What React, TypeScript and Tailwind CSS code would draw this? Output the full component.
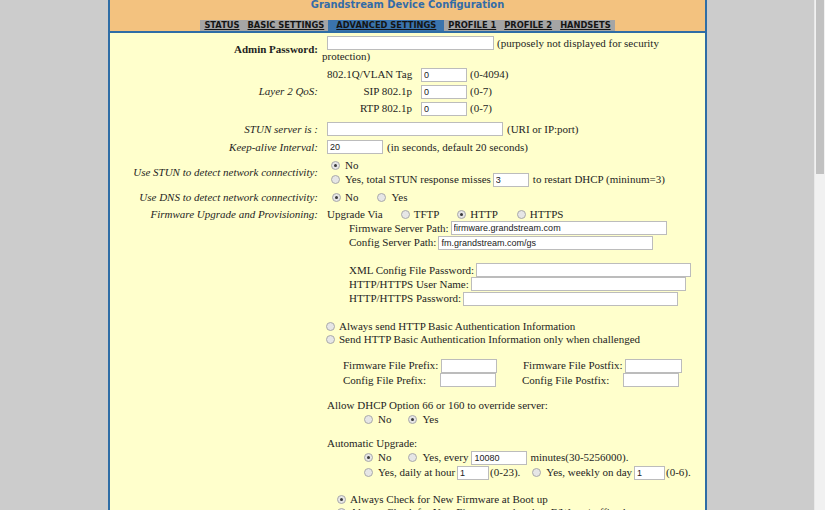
import React from "react";

const Radio = ({ checked = false, className = "" }: { checked?: boolean; className?: string }) => (
  <span
    className={`inline-flex h-[9px] w-[9px] shrink-0 items-center justify-center rounded-full border border-[#a9a9a9] bg-[#e6e6e6] ${className}`}
  >
    {checked && <span className="h-[3px] w-[3px] rounded-full bg-[#3a3a3a]" />}
  </span>
);

const Field = ({ value = "", className = "" }: { value?: string; className?: string }) => (
  <input
    readOnly
    defaultValue={value}
    className={`h-[14px] shrink-0 border border-[#bcbcbc] bg-white pl-[2px] font-['Liberation_Sans',Arial,sans-serif] text-[9px] text-[#222] outline-none ${className}`}
  />
);

const tabs = ["STATUS", "BASIC SETTINGS", "ADVANCED SETTINGS", "PROFILE 1", "PROFILE 2", "HANDSETS"];

const Row = ({ label, bold = false, top = false, className = "", children }: {
  label: string;
  bold?: boolean;
  top?: boolean;
  className?: string;
  children: React.ReactNode;
}) => (
  <div className={`grid grid-cols-[217px_1fr] ${className}`}>
    <div
      className={`flex justify-end pr-[9px] text-right ${top ? "items-start leading-[13px]" : "items-center"} ${bold ? "font-bold" : "italic"}`}
    >
      {label}
    </div>
    <div className="flex flex-col">{children}</div>
  </div>
);

const Line = ({ h = "h-[14px]", className = "", children }: { h?: string; className?: string; children?: React.ReactNode }) => (
  <div className={`flex items-center whitespace-nowrap ${h} ${className}`}>{children}</div>
);

export default function App() {
  return (
    <div className="flex h-[510px] w-[825px] overflow-hidden bg-[#cccccc] font-['Liberation_Serif','Times_New_Roman',serif] text-[11px] text-[#1e1e1e]">
      <div className="flex-1">
        <div className="ml-[108px] w-[599px] border-x-2 border-[#2f6da5] bg-[#ffffcc] pb-[40px]">
          {/* header */}
          <div className="flex h-[31px] flex-col items-center overflow-hidden bg-[#f3c27f]">
            <div className="-mt-[2px] h-[14px] font-['DejaVu_Sans_Condensed','DejaVu_Sans',Tahoma,sans-serif] text-[11px] font-bold leading-[14px] text-[#336ca8]">
              Grandstream Device Configuration
            </div>
            <div className="mt-auto flex h-[11px] bg-[#a5a5a5] font-['DejaVu_Sans',Verdana,sans-serif] text-[8.3px] font-bold leading-[11px] text-[#141414]">
              {tabs.map((t) => (
                <span
                  key={t}
                  className={`underline ${t === "ADVANCED SETTINGS" ? "bg-[#3a74ad] px-[8px]" : "px-[4px]"}`}
                >
                  {t}
                </span>
              ))}
            </div>
          </div>
          <div className="h-[2px] bg-[#2f6da5]" />

          {/* admin password */}
          <Row label="Admin Password:" bold className="pt-[3px]">
            <Line>
              <Field className="w-[167px]" />
              <span className="ml-[3px]">(purposely not displayed for security</span>
            </Line>
            <Line h="h-[13px]" className="-ml-[5px]">protection)</Line>
          </Row>

          {/* layer 2 qos */}
          <Row label="Layer 2 QoS:" className="mt-[3px]">
            {[
              ["802.1Q/VLAN Tag", "(0-4094)"],
              ["SIP 802.1p", "(0-7)"],
              ["RTP 802.1p", "(0-7)"],
            ].map(([l, r]) => (
              <Line key={l} h="h-[17px]">
                <span className="w-[85px] text-right">{l}</span>
                <Field value="0" className="ml-[9px] w-[46px]" />
                <span className="ml-[3px]">{r}</span>
              </Line>
            ))}
          </Row>

          <Row label="STUN server is :" className="mt-[3px]">
            <Line h="h-[18px]">
              <Field className="w-[176px]" />
              <span className="ml-[4px]">(URI or IP:port)</span>
            </Line>
          </Row>

          <Row label="Keep-alive Interval:">
            <Line h="h-[18px]">
              <Field value="20" className="w-[56px]" />
              <span className="ml-[4px]">(in seconds, default 20 seconds)</span>
            </Line>
          </Row>

          <Row label="Use STUN to detect network connectivity:" className="pt-[2px]">
            <Line>
              <Radio checked className="ml-[4px]" />
              <span className="ml-[5px]">No</span>
            </Line>
            <Line h="h-[15px]">
              <Radio className="ml-[4px]" />
              <span className="ml-[5px]">Yes, total STUN response misses</span>
              <Field value="3" className="ml-[2px] w-[36px]" />
              <span className="ml-[4px]">to restart DHCP (mininum=3)</span>
            </Line>
          </Row>

          <Row label="Use DNS to detect network connectivity:">
            <Line h="h-[21px]">
              <Radio checked className="ml-[5px]" />
              <span className="ml-[4px]">No</span>
              <Radio className="ml-[19px]" />
              <span className="ml-[5px]">Yes</span>
            </Line>
          </Row>

          <Row label="Firmware Upgrade and Provisioning:" top>
            <Line h="h-[13px]">
              <span>Upgrade Via</span>
              <Radio className="ml-[18px]" />
              <span className="ml-[4px]">TFTP</span>
              <Radio checked className="ml-[18px]" />
              <span className="ml-[4px]">HTTP</span>
              <Radio className="ml-[19px]" />
              <span className="ml-[4px]">HTTPS</span>
            </Line>
            <Line className="pl-[22px]">
              <span>Firmware Server Path:</span>
              <Field value="firmware.grandstream.com" className="ml-[2px] w-[216px]" />
            </Line>
            <Line h="h-[15px]" className="pl-[22px]">
              <span>Config Server Path:</span>
              <Field value="fm.grandstream.com/gs" className="ml-[2px] w-[215px]" />
            </Line>
            <div className="h-[13px]" />
            <Line className="pl-[22px]">
              <span>XML Config File Password:</span>
              <Field className="ml-[2px] w-[215px]" />
            </Line>
            <Line className="pl-[22px]">
              <span>HTTP/HTTPS User Name:</span>
              <Field className="ml-[2px] w-[215px]" />
            </Line>
            <Line h="h-[15px]" className="pl-[22px]">
              <span>HTTP/HTTPS Password:</span>
              <Field className="ml-[2px] w-[215px]" />
            </Line>
            <div className="h-[14px]" />
            <Line h="h-[13px]">
              <Radio className="-ml-[1px]" />
              <span className="ml-[4px]">Always send HTTP Basic Authentication Information</span>
            </Line>
            <Line h="h-[13px]">
              <Radio className="-ml-[1px]" />
              <span className="ml-[4px]">Send HTTP Basic Authentication Information only when challenged</span>
            </Line>
            <div className="h-[12px]" />
            <div className="grid grid-cols-[180px_1fr] pl-[16px]">
              <Line h="h-[15px]">
                <span>Firmware File Prefix:</span>
                <Field className="ml-[3px] w-[56px]" />
              </Line>
              <Line h="h-[15px]">
                <span>Firmware File Postfix:</span>
                <Field className="ml-[2px] w-[57px]" />
              </Line>
              <Line>
                <span>Config File Prefix:</span>
                <Field className="ml-[14px] w-[56px]" />
              </Line>
              <Line className="-ml-[1px]">
                <span>Config File Postfix:</span>
                <Field className="ml-[14px] w-[56px]" />
              </Line>
            </div>
            <div className="h-[12px]" />
            <Line h="h-[13px]">Allow DHCP Option 66 or 160 to override server:</Line>
            <Line className="pl-[37px]">
              <Radio />
              <span className="ml-[5px]">No</span>
              <Radio checked className="ml-[17px]" />
              <span className="ml-[5px]">Yes</span>
            </Line>
            <div className="h-[11px]" />
            <Line h="h-[13px]">Automatic Upgrade:</Line>
            <Line h="h-[15px]" className="pl-[37px]">
              <Radio checked />
              <span className="ml-[5px]">No</span>
              <Radio className="ml-[17px]" />
              <span className="ml-[5px]">Yes, every</span>
              <Field value="10080" className="ml-[3px] w-[56px]" />
              <span className="ml-[3px]">minutes(30-5256000).</span>
            </Line>
            <Line h="h-[15px]" className="pl-[37px]">
              <Radio />
              <span className="ml-[5px]">Yes, daily at hour</span>
              <Field value="1" className="ml-[2px] w-[32px]" />
              <span className="ml-[1px]">(0-23).</span>
              <Radio className="ml-[12px]" />
              <span className="ml-[5px]">Yes, weekly on day</span>
              <Field value="1" className="ml-[2px] w-[31px]" />
              <span className="ml-[1px]">(0-6).</span>
            </Line>
            <div className="h-[13px]" />
            <Line h="h-[13px]" className="pl-[10px]">
              <Radio checked />
              <span className="ml-[4px]">Always Check for New Firmware at Boot up</span>
            </Line>
            <Line h="h-[13px]" className="pl-[10px]">
              <Radio />
              <span className="ml-[4px]">Always Check for New Firmware only when F/W pre/suffix changes</span>
            </Line>
            <Line h="h-[13px]" className="pl-[10px]">
              <Radio />
              <span className="ml-[4px]">Always Skip the Firmware Check</span>
            </Line>
          </Row>
        </div>
      </div>
      <div className="w-[11px] border-l border-[#e8e8e8] bg-[#f1f1f1]">
        <div className="mx-[1px] h-[174px] bg-[#c1c1c1]" />
      </div>
    </div>
  );
}
